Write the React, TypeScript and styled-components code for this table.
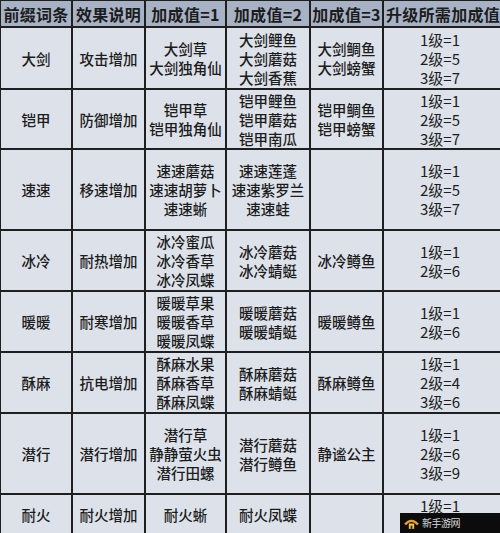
import React from 'react';
import styled, { createGlobalStyle } from 'styled-components';

const GlobalStyle = createGlobalStyle`
  html, body {
    margin: 0;
    padding: 0;
    background: #dde2ea;
  }
  body {
    font-family: "Noto Sans CJK SC", "Noto Sans", sans-serif;
  }
`;

interface IRow {
  name: string;
  effect: string;
  plus1: string[];
  plus2: string[];
  plus3: string[];
  levels: string[];
  height: number;
}

const headers = ['前缀词条', '效果说明', '加成值=1', '加成值=2', '加成值=3', '升级所需加成值'];
const widths = [72, 73, 81, 84, 73, 120];

const rows: IRow[] = [
  {
    name: '大剑',
    effect: '攻击增加',
    plus1: ['大剑草', '大剑独角仙'],
    plus2: ['大剑鲤鱼', '大剑蘑菇', '大剑香蕉'],
    plus3: ['大剑鲷鱼', '大剑螃蟹'],
    levels: ['1级=1', '2级=5', '3级=7'],
    height: 62,
  },
  {
    name: '铠甲',
    effect: '防御增加',
    plus1: ['铠甲草', '铠甲独角仙'],
    plus2: ['铠甲鲤鱼', '铠甲蘑菇', '铠甲南瓜'],
    plus3: ['铠甲鲷鱼', '铠甲螃蟹'],
    levels: ['1级=1', '2级=5', '3级=7'],
    height: 60,
  },
  {
    name: '速速',
    effect: '移速增加',
    plus1: ['速速蘑菇', '速速胡萝卜', '速速蜥'],
    plus2: ['速速莲蓬', '速速紫罗兰', '速速蛙'],
    plus3: [],
    levels: ['1级=1', '2级=5', '3级=7'],
    height: 81,
  },
  {
    name: '冰冷',
    effect: '耐热增加',
    plus1: ['冰冷蜜瓜', '冰冷香草', '冰冷凤蝶'],
    plus2: ['冰冷蘑菇', '冰冷蜻蜓'],
    plus3: ['冰冷鳟鱼'],
    levels: ['1级=1', '2级=6'],
    height: 61,
  },
  {
    name: '暖暖',
    effect: '耐寒增加',
    plus1: ['暖暖草果', '暖暖香草', '暖暖凤蝶'],
    plus2: ['暖暖蘑菇', '暖暖蜻蜓'],
    plus3: ['暖暖鳟鱼'],
    levels: ['1级=1', '2级=6'],
    height: 61,
  },
  {
    name: '酥麻',
    effect: '抗电增加',
    plus1: ['酥麻水果', '酥麻香草', '酥麻凤蝶'],
    plus2: ['酥麻蘑菇', '酥麻蜻蜓'],
    plus3: ['酥麻鳟鱼'],
    levels: ['1级=1', '2级=4', '3级=6'],
    height: 61,
  },
  {
    name: '潜行',
    effect: '潜行增加',
    plus1: ['潜行草', '静静萤火虫', '潜行田螺'],
    plus2: ['潜行蘑菇', '潜行鳟鱼'],
    plus3: ['静谧公主'],
    levels: ['1级=1', '2级=6', '3级=9'],
    height: 81,
  },
  {
    name: '耐火',
    effect: '耐火增加',
    plus1: ['耐火蜥'],
    plus2: ['耐火凤蝶'],
    plus3: [],
    levels: ['1级=1', '2级=7'],
    height: 41,
  },
];

const Lines = ({ items }: { items: string[] }) => (
  <>
    {items.map((t) => (
      <Line key={t}>{t}</Line>
    ))}
  </>
);

const App = () => {
  return (
    <Page>
      <GlobalStyle />
      <Table>
        <colgroup>
          {widths.map((w, i) => (
            <col key={i} style={{ width: w }} />
          ))}
        </colgroup>
        <thead>
          <tr>
            {headers.map((h) => (
              <HeadCell key={h}>{h}</HeadCell>
            ))}
          </tr>
        </thead>
        <tbody>
          {rows.map((r) => (
            <Row key={r.name} $height={r.height}>
              <Cell>{r.name}</Cell>
              <Cell>{r.effect}</Cell>
              <Cell>
                <Lines items={r.plus1} />
              </Cell>
              <Cell>
                <Lines items={r.plus2} />
              </Cell>
              <Cell>
                <Lines items={r.plus3} />
              </Cell>
              <LevelCell>
                <Lines items={r.levels} />
              </LevelCell>
            </Row>
          ))}
        </tbody>
      </Table>
      {/* site watermark sits over the last cell */}
      <Watermark>
        <Logo viewBox="0 0 14 12">
          <path d="M1 7 Q7 0 13 7" fill="none" stroke="#f0a020" strokeWidth="2.2" />
          <rect x="4.5" y="6" width="5" height="5" fill="#f5c542" />
          <rect x="6.2" y="8" width="1.6" height="3" fill="#222" />
        </Logo>
        <MarkText>新手游网</MarkText>
      </Watermark>
    </Page>
  );
};

export default App;

const Page = styled.div`
  position: relative;
  width: 500px;
  height: 533px;
  overflow: hidden;
  background: #dde2ea;
`;

const Table = styled.table`
  border-collapse: collapse;
  table-layout: fixed;
  width: 503px;
  margin-left: -1px;
  margin-top: -1px;
  color: #1c1c1c;
`;

const HeadCell = styled.th`
  height: 25px;
  padding: 0;
  background: #a7b2c4;
  border: 2px solid #1f1f1f;
  font-size: 16px;
  font-weight: 700;
  line-height: 20px;
  text-align: center;
  white-space: nowrap;
  overflow: hidden;
  letter-spacing: 0.3px;
`;

const Row = styled.tr<{ $height: number }>`
  height: ${(p) => p.$height}px;
`;

const Cell = styled.td`
  padding: 0;
  background: #dde2ea;
  border: 2px solid #1f1f1f;
  font-size: 14.5px;
  font-weight: 500;
  line-height: 19px;
  text-align: center;
  vertical-align: middle;
  white-space: nowrap;
`;

const LevelCell = styled(Cell)`
  font-family: "Noto Sans CJK SC", "Open Sans", sans-serif;
  font-size: 15px;
  font-weight: 400;
  padding-right: 6px;
`;

const Line = styled.div`
  display: block;
`;

const Watermark = styled.div`
  position: absolute;
  right: 0;
  bottom: 0;
  width: 100px;
  height: 20px;
  display: flex;
  align-items: center;
  gap: 3px;
  padding-left: 4px;
  box-sizing: border-box;
  background: #0c0c0c;
`;

const Logo = styled.svg`
  width: 15px;
  height: 13px;
`;

const MarkText = styled.span`
  color: #d8d8d8;
  font-size: 10px;
  line-height: 12px;
  font-family: "Noto Sans CJK SC", serif;
  letter-spacing: -0.5px;
`;
